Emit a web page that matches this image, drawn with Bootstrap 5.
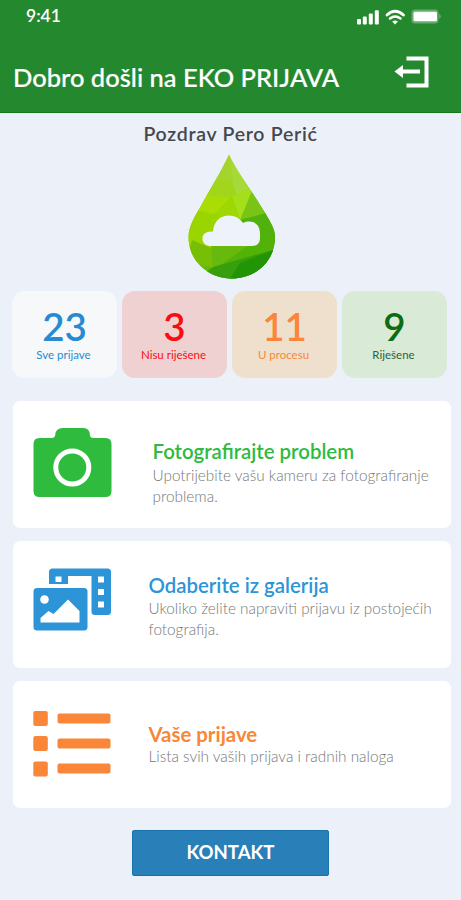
<!DOCTYPE html>
<html lang="hr">
<head>
<meta charset="utf-8">
<meta name="viewport" content="width=device-width, initial-scale=1">
<title>EKO PRIJAVA</title>
<link href="https://cdn.jsdelivr.net/npm/bootstrap@5.3.0/dist/css/bootstrap.min.css" rel="stylesheet">
<style>
body{background:#ecf0f9;font-family:Lato,"Open Sans",sans-serif;width:461px;height:900px;overflow:hidden}
svg{display:block;flex:none}
.app-header{background:#24892e;height:113px;border-bottom:1px solid #16791d}
.status-bar{height:33px;padding:0 20px 0 26px}
.clock{font-size:17.5px;font-weight:600}
.title-row{padding:10px 31px 0 13px}
.app-title{font-size:25.5px;font-weight:500;-webkit-text-stroke:.2px #fff;line-height:36px;margin-top:16px}
.exit-icon{margin-top:13px}
.greeting{font-size:19.5px;font-weight:600;letter-spacing:.72px;line-height:24px;color:#45484d;padding-top:9px}
.stats{padding:11px 14px 0 12px;gap:5px}
.stat{flex:1 1 0;height:87px;border-radius:13px;padding-top:12px}
.stat-num{font-size:38.5px;font-weight:600;line-height:47px}
.stat-label{font-size:11.5px;line-height:14px;margin-top:-2px;padding-right:2px}
.s-all{background:#f7f8f9;color:#268bd2}
.s-open{background:#efd1d2;color:#f90d12}
.s-work{background:#efe0ce;color:#fb8638}
.s-done{background:#d9ebd7;color:#0c6c12}
.s-done .stat-label{color:#2f6136}
.actions{padding:23px 10px 0 12.5px;gap:13px}
.action{height:127px;border-radius:7px;padding-left:20.5px}
.action h2{font-size:20.4px;font-weight:600;line-height:24px;margin:0}
.action p{font-size:15.35px;font-weight:300;line-height:20.5px;color:#777;margin:0}
.t-camera{padding:38px 0 0 40.5px;color:#2ebb3e}
.t-camera p{margin-top:2px}
.t-gallery{padding:32px 0 0 36.5px;color:#2d94d8}
.t-gallery p{margin-top:1px}
.t-list{padding:41px 0 0 36.5px;color:#fa8737}
.t-list h2{font-weight:700}
.contact{width:197px;height:46px;margin-top:22px;background:#2980b9;border:1px solid #1673ad;border-radius:2px;color:#fff;font-size:18.6px;font-weight:700}
</style>
</head>
<body>
<header class="app-header text-white">
  <div class="status-bar d-flex align-items-center justify-content-between">
    <span class="clock">9:41</span>
    <svg width="86" height="16" viewBox="355 8 86 16" fill="#fff">
      <rect x="357" y="18" width="4" height="5.5" rx="1"/><rect x="362.8" y="15.5" width="4" height="8" rx="1"/><rect x="368.8" y="12.5" width="4" height="11" rx="1"/><rect x="374.8" y="9.3" width="4" height="14.2" rx="1"/>
      <path d="M387 14Q395 6.5 403.500 14" fill="none" stroke="#fff" stroke-width="2.700" stroke-linecap="round"/><path d="M390 17.500Q395 13.600 400.500 17.500" fill="none" stroke="#fff" stroke-width="2.500" stroke-linecap="round"/><path d="M392.200 20.500Q395 18.400 398 20.500L395 23.500Z"/>
      <rect x="411.500" y="8.500" width="27" height="14" rx="3.500" opacity=".3"/><rect x="413.500" y="10.700" width="23.500" height="9.600" rx="1.500"/><path d="M439.500 13Q441.500 15 439.500 18Z" opacity=".5"/>
    </svg>
  </div>
  <div class="title-row d-flex align-items-start justify-content-between">
    <h1 class="app-title mb-0 text-nowrap">Dobro došli na EKO PRIJAVA</h1>
    <svg class="exit-icon" width="36" height="32" viewBox="394 56 36 32" fill="none" stroke="#fff"><path d="M406.500 58.500H426.500V85.500H406.500" stroke-width="4"/><path d="M402 71.500H420" stroke-width="4"/><path d="M394.500 71.500L403 65V78Z" fill="#fff" stroke="none"/></svg>
  </div>
</header>
<main class="d-flex flex-column">
  <div class="greeting text-center">Pozdrav Pero Perić</div>
  <svg class="mx-auto mt-2" width="88" height="126" viewBox="187 154 88 126">
    <defs>
      <linearGradient id="leaf" x1="0" y1="0" x2=".65" y2="1"><stop offset="0" stop-color="#b8dc3a"/><stop offset=".45" stop-color="#9fd911"/><stop offset="1" stop-color="#2e9c05"/></linearGradient>
      <clipPath id="drop"><path d="M229 154.500C237 172 250 188 262 208C270 221 275 228 275 237C275 262 255 278.500 231.500 278.500C208 278.500 188.500 261 188.500 237C188.500 226 195 216 202 204C212 186 222 170 229 154.500Z"/></clipPath>
    </defs>
    <g clip-path="url(#drop)">
      <rect x="187" y="154" width="90" height="126" fill="url(#leaf)"/>
      <path d="M229 154L254 190L238 196L228 182Z" fill="#a5da38"/>
      <path d="M229 154L210 183L235 196Z" fill="#a5d42c"/>
      <path d="M210 180L230 180L238 196L204 196Z" fill="#a1d61d"/>
      <path d="M204 195L232 198L213 215L187 208Z" fill="#aadd05"/>
      <path d="M238 194L254 186L241 222L231 197Z" fill="#a5df1b"/>
      <path d="M254 186L270 214L240 220Z" fill="#79c414"/>
      <path d="M232 196L241 221L213 215Z" fill="#9ed703"/>
      <path d="M187 207L213 214L241 220L258 240L207 250L187 246Z" fill="#9bd500"/>
      <path d="M240 220L266 213L278 238L257 240Z" fill="#51b20d"/>
      <path d="M192 240L211 248L213 268L187 258Z" fill="#77bf05"/>
      <path d="M211 246L252 243L238 261L213 268Z" fill="#68b90d"/>
      <path d="M252 243L276 234V252L218 267Z" fill="#53b208"/>
      <path d="M213 267L276 249V280H196Z" fill="#379f0b"/>
      <path d="M240 263L276 249L262 280H229Z" fill="#219506"/>
    </g>
    <path d="M210 246C205 246 202.500 242 202.500 238.500C202.500 234 206 231 213 231.500C214 220 221 215.500 229 215.500C235 215.500 240 218.500 243 223C247 221 250 221.500 253 222C258 224 260 228 260 234V238C260 243 257 246 252 246Z" fill="#eef2fb"/>
  </svg>
  <section class="stats d-flex text-center">
    <div class="stat s-all"><div class="stat-num">23</div><div class="stat-label">Sve prijave</div></div>
    <div class="stat s-open"><div class="stat-num">3</div><div class="stat-label">Nisu riješene</div></div>
    <div class="stat s-work"><div class="stat-num">11</div><div class="stat-label">U procesu</div></div>
    <div class="stat s-done"><div class="stat-num">9</div><div class="stat-label">Riješene</div></div>
  </section>
  <section class="actions d-flex flex-column">
    <a class="action bg-white d-flex text-decoration-none" href="#">
      <svg width="79" height="127" viewBox="33.500 401 79 127"><path d="M40 438H52Q55.500 438 55.800 434.500Q56.500 428 63 428H84Q90 428 90.300 434.500Q90.600 438 94 438H106Q112 438 112 444V491Q112 497 106 497H40Q34 497 34 491V444Q34 438 40 438Z" fill="#2ebb3e"/><circle cx="72.800" cy="467.500" r="16.500" fill="none" stroke="#fff" stroke-width="5"/></svg>
      <div class="t-camera"><h2>Fotografirajte problem</h2><p>Upotrijebite vašu kameru za fotografiranje<br>problema.</p></div>
    </a>
    <a class="action bg-white d-flex text-decoration-none" href="#">
      <svg width="79" height="127" viewBox="33.500 541 79 127"><path fill="#2d94d8" fill-rule="evenodd" d="M53 568.500H108Q111.500 568.500 111.500 572V611.500Q111.500 615 108 615H95.500Q92 615 92 611.500V576H68.500V584H49.500V572Q49.500 568.500 53 568.500ZM56 576.500V582H62V576.500ZM98.500 576.500V582.500H104.500V576.500ZM98.500 589V595H104.500V589ZM98.500 601.500V607.500H104.500V601.500Z"/><rect x="34" y="588" width="54" height="42.500" rx="3.500" fill="#2d94d8"/><circle cx="45" cy="599.500" r="4.300" fill="#fff"/><path d="M41 622.500V618L49 611L54 614L68.500 599.500L80 611V622.500Z" fill="#fff"/></svg>
      <div class="t-gallery"><h2>Odaberite iz galerija</h2><p>Ukoliko želite napraviti prijavu iz postojećih<br>fotografija.</p></div>
    </a>
    <a class="action bg-white d-flex text-decoration-none" href="#">
      <svg width="79" height="127" viewBox="33.500 681 79 127" fill="#fa8737"><rect x="33.800" y="711" width="14.500" height="15" rx="2"/><rect x="33.800" y="736" width="14.500" height="15" rx="2"/><rect x="33.800" y="761.500" width="14.500" height="15" rx="2"/><rect x="58" y="713.500" width="53" height="10" rx="2"/><rect x="58" y="738.500" width="53" height="10" rx="2"/><rect x="58" y="763.500" width="53" height="10" rx="2"/></svg>
      <div class="t-list"><h2>Vaše prijave</h2><p>Lista svih vaših prijava i radnih naloga</p></div>
    </a>
  </section>
  <button class="contact btn p-0 mx-auto d-block" type="button">KONTAKT</button>
</main>
<script src="https://cdn.jsdelivr.net/npm/bootstrap@5.3.0/dist/js/bootstrap.bundle.min.js"></script>
</body>
</html>
